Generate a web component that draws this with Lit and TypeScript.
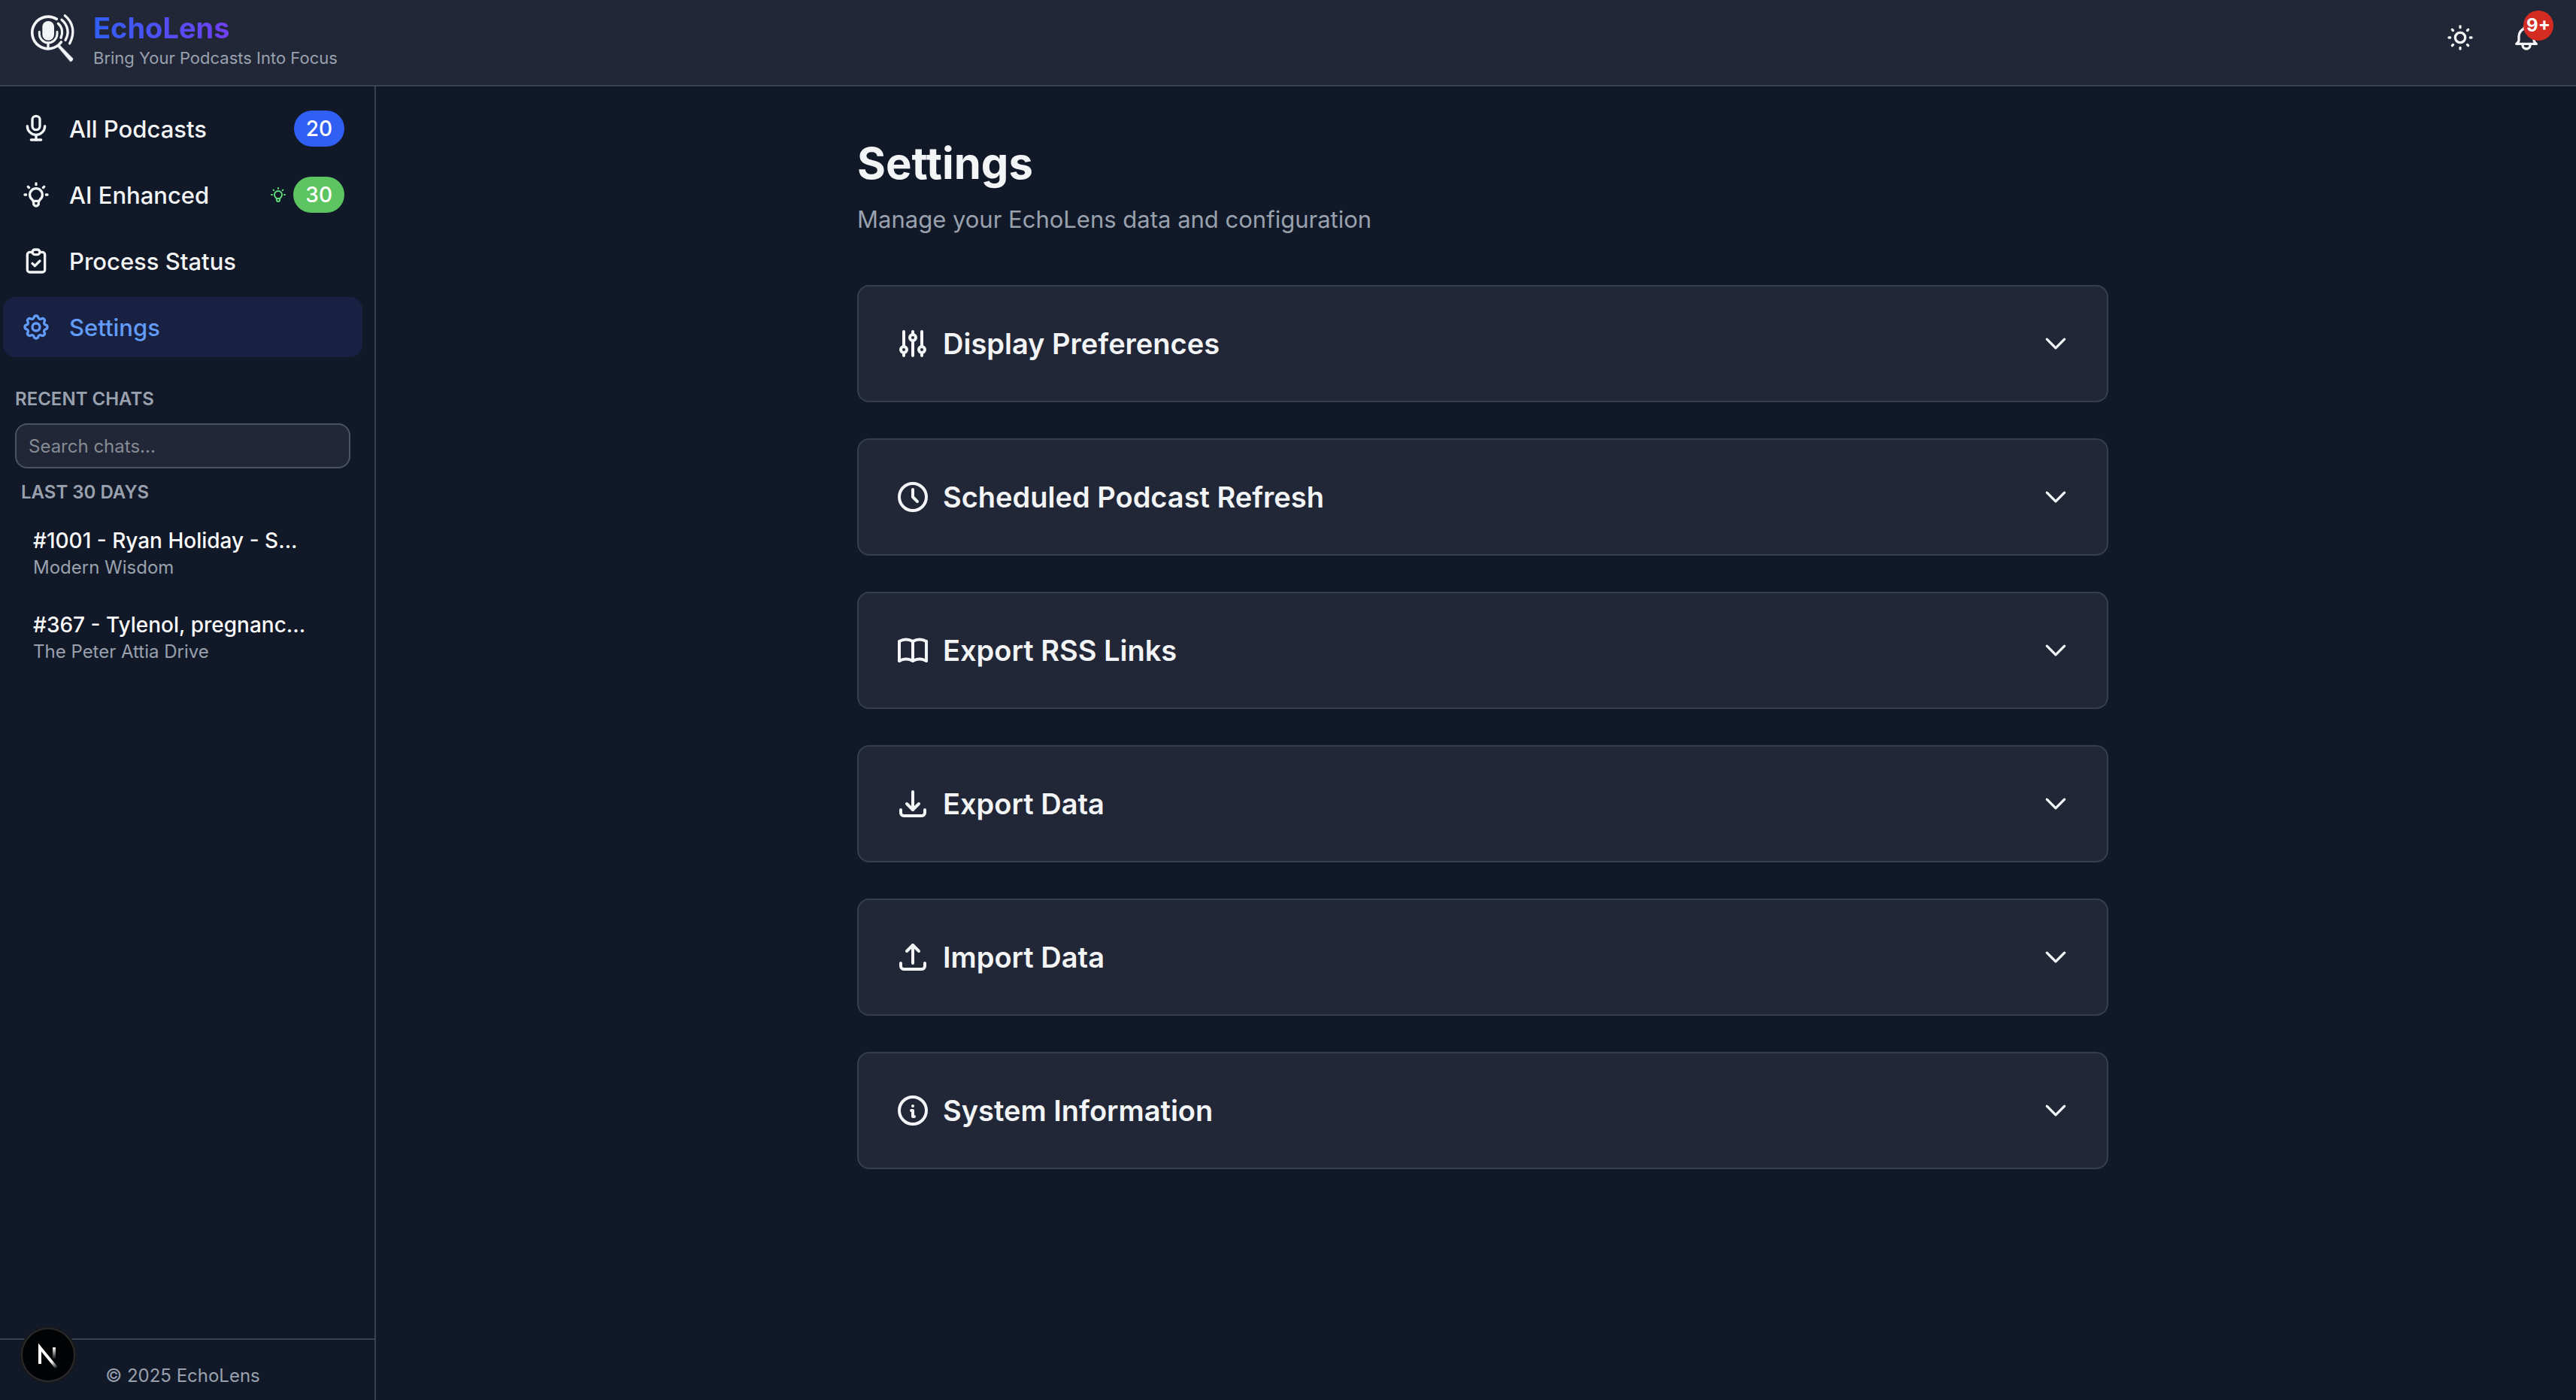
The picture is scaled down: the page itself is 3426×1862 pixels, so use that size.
import { LitElement, html, css, svg } from "lit";
import { customElement, property, state } from "lit/decorators.js";

const ICONS: Record<string, string[]> = {
  microphone: [
    "M9 5a3 3 0 0 1 3 -3a3 3 0 0 1 3 3v5a3 3 0 0 1 -3 3a3 3 0 0 1 -3 -3z",
    "M5 10a7 7 0 0 0 14 0",
    "M8 21h8",
    "M12 17v4",
  ],
  bulb: [
    "M3 12h1m8 -9v1m8 8h1m-15.4 -6.4l.7 .7m12.1 -.7l-.7 .7",
    "M9 16a5 5 0 1 1 6 0a3.5 3.5 0 0 0 -1 3a2 2 0 0 1 -4 0a3.5 3.5 0 0 0 -1 -3",
    "M9.7 17h4.6",
  ],
  clipboard: [
    "M9 5h-2a2 2 0 0 0 -2 2v12a2 2 0 0 0 2 2h10a2 2 0 0 0 2 -2v-12a2 2 0 0 0 -2 -2h-2",
    "M9 5a2 2 0 0 1 2 -2h2a2 2 0 0 1 2 2a2 2 0 0 1 -2 2h-2a2 2 0 0 1 -2 -2z",
    "M9 14l2 2l4 -4",
  ],
  settings: [
    "M10.325 4.317c.426 -1.756 2.924 -1.756 3.35 0a1.724 1.724 0 0 0 2.573 1.066c1.543 -.94 3.31 .826 2.37 2.37a1.724 1.724 0 0 0 1.065 2.572c1.756 .426 1.756 2.924 0 3.35a1.724 1.724 0 0 0 -1.066 2.573c.94 1.543 -.826 3.31 -2.37 2.37a1.724 1.724 0 0 0 -2.572 1.065c-.426 1.756 -2.924 1.756 -3.35 0a1.724 1.724 0 0 0 -2.573 -1.066c-1.543 .94 -3.31 -.826 -2.37 -2.37a1.724 1.724 0 0 0 -1.065 -2.572c-1.756 -.426 -1.756 -2.924 0 -3.35a1.724 1.724 0 0 0 1.066 -2.573c-.94 -1.543 .826 -3.31 2.37 -2.37c1 .608 2.296 .07 2.572 -1.065z",
    "M9 12a3 3 0 1 0 6 0a3 3 0 0 0 -6 0",
  ],
  sun: [
    "M8 12a4 4 0 1 0 8 0a4 4 0 1 0 -8 0",
    "M3 12h1m8 -9v1m8 8h1m-9 8v1m-6.4 -15.4l.7 .7m12.1 -.7l-.7 .7m0 11.4l.7 .7m-12.1 -.7l-.7 .7",
  ],
  bell: [
    "M10 5a2 2 0 1 1 4 0a7 7 0 0 1 4 6v3a4 4 0 0 0 2 3h-16a4 4 0 0 0 2 -3v-3a7 7 0 0 1 4 -6",
    "M9 17v1a3 3 0 0 0 6 0v-1",
  ],
  adjustments: [
    "M4 16a2 2 0 1 0 4 0a2 2 0 0 0 -4 0",
    "M6 4v10m0 4v2",
    "M10 8a2 2 0 1 0 4 0a2 2 0 0 0 -4 0",
    "M12 4v2m0 4v10",
    "M16 16a2 2 0 1 0 4 0a2 2 0 0 0 -4 0",
    "M18 4v10m0 4v2",
  ],
  clock: ["M3 12a9 9 0 1 0 18 0a9 9 0 0 0 -18 0", "M12 7v5l3 3"],
  book: [
    "M3 19a9 9 0 0 1 9 0a9 9 0 0 1 9 0",
    "M3 6a9 9 0 0 1 9 0a9 9 0 0 1 9 0",
    "M3 6v13m9 -13v13m9 -13v13",
  ],
  download: ["M4 16v2a2 2 0 0 0 2 2h12a2 2 0 0 0 2 -2v-2", "M8 12l4 4l4 -4", "M12 4v12"],
  upload: ["M4 16v2a2 2 0 0 0 2 2h12a2 2 0 0 0 2 -2v-2", "M8 8l4 -4l4 4", "M12 4v12"],
  info: ["M3 12a9 9 0 1 0 18 0a9 9 0 0 0 -18 0", "M12 9h.01", "M11 12h1v4h1"],
};

@customElement("line-icon")
class LineIcon extends LitElement {
  @property() name = "";
  static styles = css`
    :host { display: block; width: 40px; height: 40px; flex: none; }
    .icon { display: block; width: 100%; height: 100%; }
  `;
  render() {
    return html`<svg class="icon" viewBox="0 0 24 24" fill="none" stroke="currentColor" stroke-width="2"
      stroke-linecap="round" stroke-linejoin="round" aria-hidden="true">
      ${(ICONS[this.name] ?? []).map((d) => svg`<path d=${d}></path>`)}
    </svg>`;
  }
}

@customElement("settings-card")
class SettingsCard extends LitElement {
  @property() icon = "";
  @property() label = "";
  @state() private open = false;
  static styles = css`
    :host { display: block; }
    .card {
      box-sizing: border-box; width: 100%; display: flex; align-items: center; gap: 16px;
      padding: 48px; margin: 0; border: 2px solid #363f4f; border-radius: 16px;
      background: #212737; color: #f3f4f6; font-family: inherit; text-align: left; cursor: pointer;
    }
    .icon { width: 48px; height: 48px; }
    .label { flex: 1; margin: 0; font-size: 38px; line-height: 56px; font-weight: 600; }
    .title { margin: 0; }
    .chevron { width: 40px; height: 40px; flex: none; }
    .open { transform: rotate(180deg); }
  `;
  render() {
    return html`<h2 class="title"><button class="card" aria-expanded=${this.open ? "true" : "false"}
      @click=${() => (this.open = !this.open)}>
      <line-icon class="icon" name=${this.icon}></line-icon>
      <span class="label">${this.label}</span>
      <svg class="chevron ${this.open ? "open" : ""}" viewBox="0 0 24 24" fill="none" stroke="currentColor"
        stroke-width="2" stroke-linecap="round" stroke-linejoin="round" aria-hidden="true">
        <path d="M19 8.5l-7 7l-7 -7"></path>
      </svg>
    </button></h2>`;
  }
}

interface NavItem { icon: string; label: string; count?: number; tone?: string; }

@customElement("app-root")
class AppRoot extends LitElement {
  private nav: NavItem[] = [
    { icon: "microphone", label: "All Podcasts", count: 20, tone: "blue" },
    { icon: "bulb", label: "AI Enhanced", count: 30, tone: "green" },
    { icon: "clipboard", label: "Process Status" },
    { icon: "settings", label: "Settings" },
  ];
  private chats = [
    { title: "#1001 - Ryan Holiday - S...", show: "Modern Wisdom" },
    { title: "#367 - Tylenol, pregnanc...", show: "The Peter Attia Drive" },
  ];
  private cards = [
    { icon: "adjustments", label: "Display Preferences" },
    { icon: "clock", label: "Scheduled Podcast Refresh" },
    { icon: "book", label: "Export RSS Links" },
    { icon: "download", label: "Export Data" },
    { icon: "upload", label: "Import Data" },
    { icon: "info", label: "System Information" },
  ];

  static styles = css`
    :host {
      display: flex; flex-direction: column; min-height: 100vh; background: #111827; color: #f3f4f6;
      font-family: Inter, "Liberation Sans", sans-serif;
    }
    .header {
      display: flex; align-items: flex-start; justify-content: space-between;
      padding: 16px 32px 19px 36px; background: #212737; border-bottom: 2px solid #3a4150;
    }
    .brand { display: flex; gap: 24px; color: inherit; text-decoration: none; }
    .logo { width: 64px; height: 68px; }
    .name {
      display: block; width: max-content; font-size: 38px; line-height: 42px; font-weight: 700;
      background: linear-gradient(90deg, #315ff4, #6f3ff0); background-clip: text; -webkit-background-clip: text;
      color: transparent;
    }
    .tagline { display: block; margin-top: 2px; font-size: 22px; line-height: 34px; color: #99a1ae; }
    .actions { display: flex; gap: 20px; }
    .action {
      position: relative; display: grid; place-items: center; width: 68px; height: 68px; padding: 0;
      border: 0; background: none; color: inherit; font-family: inherit; cursor: pointer;
    }
    .alert {
      position: absolute; top: -2px; right: -2px; width: 40px; height: 40px; border-radius: 50%;
      background: #d42c22; color: #fff; font-size: 24px; line-height: 40px; font-weight: 700; text-align: center;
    }
    .body { flex: 1; display: flex; }
    .sidebar {
      box-sizing: border-box; width: 500px; flex: none; display: flex; flex-direction: column;
      border-right: 2px solid #3a4150;
    }
    .nav { display: flex; flex-direction: column; gap: 8px; padding: 16px 16px 0 4px; }
    .link {
      display: flex; align-items: center; gap: 24px; height: 80px; padding: 0 24px; border-radius: 16px;
      color: inherit; text-decoration: none; font-size: 31px; font-weight: 500;
    }
    .current { background: #182142; color: #629cf8; }
    .text { flex: 1; }
    .tally { display: flex; align-items: center; gap: 8px; }
    .spark { width: 24px; height: 24px; color: #5fd97a; }
    .count { padding: 0 16px; border-radius: 24px; color: #fff; font-size: 28px; line-height: 48px; }
    .blue { background: #2f5ff3; }
    .green { background: #5cc561; }
    .recent { padding: 40px 32px 0 20px; }
    .heading { display: block; margin: 0; font-size: 24px; line-height: 32px; font-weight: 600; color: #99a1ae; }
    .search {
      box-sizing: border-box; display: block; width: 100%; height: 60px; margin: 16px 0; padding: 0 16px;
      border: 2px solid #4a5362; border-radius: 16px; background: #212737; color: #f3f4f6;
      font-family: inherit; font-size: 24px;
    }
    .search::placeholder { color: #868b93; opacity: 1; }
    .period { padding-left: 8px; }
    .chats { display: flex; flex-direction: column; gap: 8px; margin: 12px 0 0; padding: 0; list-style: none; }
    .chat { display: block; padding: 16px 24px; color: inherit; text-decoration: none; }
    .chat-title { display: block; font-size: 28px; line-height: 40px; font-weight: 500; color: #fafafa; white-space: nowrap; }
    .show { display: block; font-size: 24px; line-height: 32px; color: #99a1ae; }
    .footer {
      margin-top: auto; padding: 32px 12px 16px 0; border-top: 2px solid #3a4150;
      text-align: center; font-size: 24px; line-height: 32px; color: #99a1ae;
    }
    .dev {
      position: fixed; left: 28px; bottom: 24px; width: 72px; height: 72px; padding: 0;
      border: 2px solid #2a2a2b; border-radius: 50%; background: #020305; box-shadow: 0 0 0 2px #17191d; cursor: pointer;
    }
    .dev-mark { display: block; width: 100%; height: 100%; }
    .main { flex: 1; padding: 64px 64px 64px 82px; }
    .page { max-width: 1664px; margin: 0 auto; }
    .page-title { margin: 0; font-size: 58px; line-height: 76px; font-weight: 700; }
    .lead { margin: 16px 0 66px; font-size: 31px; line-height: 42px; color: #99a1ae; }
    .cards { display: flex; flex-direction: column; gap: 48px; }
  `;

  private logo() {
    return html`<svg class="logo" viewBox="108 48 192 204" fill="none" stroke="#f3f4f6" stroke-linecap="round" aria-hidden="true">
      <path d="M226 76A64 64 0 1 0 244 168" stroke-width="11"></path>
      <rect x="169" y="84" width="47" height="77" rx="23" fill="#f3f4f6" stroke="none"></rect>
      <path d="M157 127v8a35 35 0 0 0 71 0v-8" stroke-width="9"></path>
      <path d="M192 172v22" stroke-width="10"></path>
      <path d="M232 94c16 14 20 36 11 57" stroke-width="10"></path>
      <path d="M246 79c26 22 31 53 15 81" stroke-width="10"></path>
      <path d="M259 62c34 28 41 70 19 111" stroke-width="10"></path>
      <path d="M230 186L238 179L291 233Q292 243 281 246Z" fill="#f3f4f6" stroke-width="1"></path>
    </svg>`;
  }

  render() {
    return html`
      <header class="header">
        <a class="brand" href="#">
          ${this.logo()}
          <span><span class="name">EchoLens</span><span class="tagline">Bring Your Podcasts Into Focus</span></span>
        </a>
        <div class="actions">
          <button class="action" aria-label="Toggle theme"><line-icon name="sun"></line-icon></button>
          <button class="action" aria-label="Notifications">
            <line-icon name="bell"></line-icon><span class="alert">9+</span>
          </button>
        </div>
      </header>
      <div class="body">
        <aside class="sidebar">
          <nav class="nav">
            ${this.nav.map((item) => html`
              <a class="link ${item.label === "Settings" ? "current" : ""}" href="#">
                <line-icon name=${item.icon}></line-icon>
                <span class="text">${item.label}</span>
                ${item.count ? html`<span class="tally">
                  ${item.tone === "green" ? html`<line-icon class="spark" name="bulb"></line-icon>` : ""}
                  <span class="count ${item.tone ?? ""}">${item.count}</span>
                </span>` : ""}
              </a>`)}
          </nav>
          <section class="recent">
            <label class="heading" for="search">RECENT CHATS</label>
            <input class="search" id="search" type="text" placeholder="Search chats..." />
            <h3 class="heading period">LAST 30 DAYS</h3>
            <ul class="chats">
              ${this.chats.map((chat) => html`<li><a class="chat" href="#">
                <span class="chat-title">${chat.title}</span><span class="show">${chat.show}</span>
              </a></li>`)}
            </ul>
          </section>
          <footer class="footer">© 2025 EchoLens</footer>
        </aside>
        <main class="main">
          <div class="page">
            <h1 class="page-title">Settings</h1>
            <p class="lead">Manage your EchoLens data and configuration</p>
            <div class="cards">
              ${this.cards.map((card) => html`<settings-card icon=${card.icon} label=${card.label}></settings-card>`)}
            </div>
          </div>
        </main>
      </div>
      <button class="dev" aria-label="Developer tools">
        <svg class="dev-mark" viewBox="0 0 68 68" fill="none" aria-hidden="true">
          <defs>
            <linearGradient id="diag" gradientUnits="userSpaceOnUse" x1="34" y1="36" x2="46" y2="52">
              <stop offset="0.4" stop-color="#fff"></stop><stop offset="1" stop-color="#fff" stop-opacity="0"></stop>
            </linearGradient>
            <linearGradient id="bar" gradientUnits="userSpaceOnUse" x1="43" y1="24" x2="43" y2="40">
              <stop offset="0" stop-color="#fff"></stop><stop offset="1" stop-color="#fff" stop-opacity="0"></stop>
            </linearGradient>
          </defs>
          <path d="M23 46V24L45 51" stroke="url(#diag)" stroke-width="4"></path>
          <path d="M42 24V40" stroke="url(#bar)" stroke-width="4"></path>
        </svg>
      </button>
    `;
  }
}
